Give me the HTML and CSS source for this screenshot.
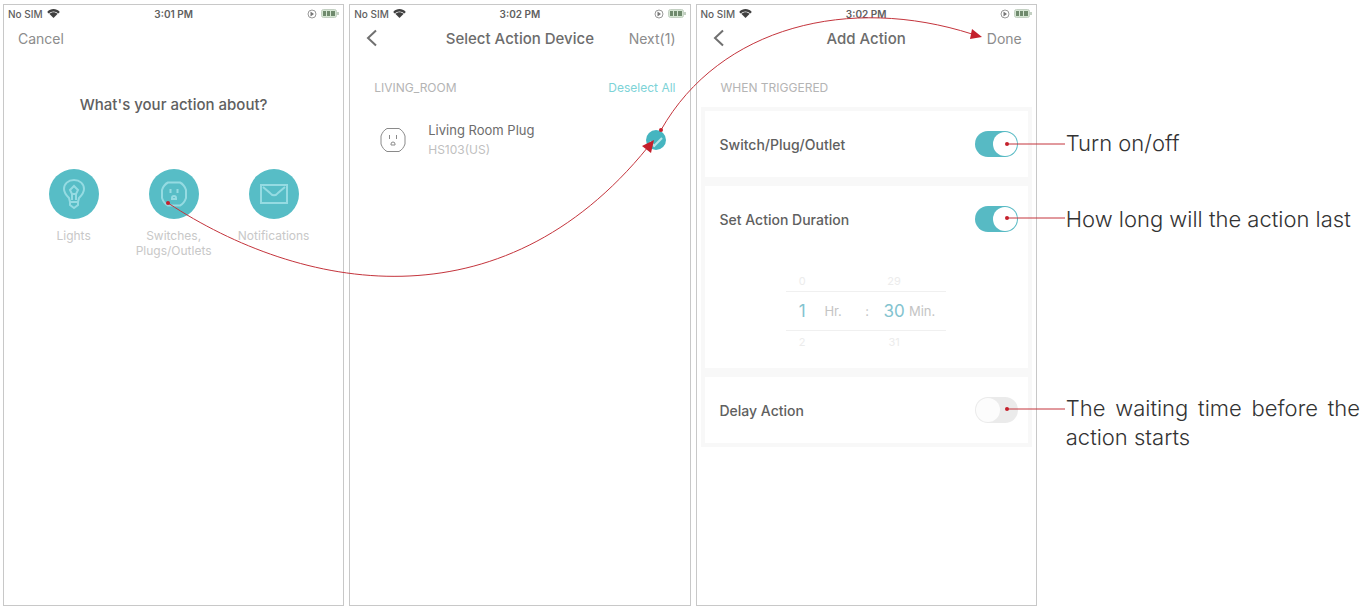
FILE: index.html
```html
<!DOCTYPE html>
<html lang="en">
<head>
    <meta charset="UTF-8">
    <meta name="viewport" content="width=device-width, initial-scale=1.0">
    <title>Add Action</title>
    <link rel="stylesheet" href="styles.css">
</head>
<body>
    <!-- shared icons -->
    <svg class="sprite" aria-hidden="true">
        <symbol id="wifi" viewBox="0 0 14 10">
            <path d="M0 3.2C4-1 10-1 14 3.2L12.3 5C9.300 2 4.700 2 1.700 5Z"/>
            <path d="M2.300 5.400C5 3 9 3 11.700 5.400L7 10Z"/>
        </symbol>
        <symbol id="lock" viewBox="0 0 10 10">
            <circle cx="5" cy="5" r="4" fill="none" stroke="currentColor" stroke-width="1"/>
            <path d="M3.500 2.500L7 5L3.500 7.500Z"/>
        </symbol>
        <symbol id="battery" viewBox="0 0 18 9">
            <rect x="0.500" y="0.500" width="15" height="8" rx="2" fill="#d5e6d3" stroke="#c3d0c2"/>
            <rect x="2" y="2" width="3" height="5" fill="#6f8a6d"/>
            <rect x="6" y="2" width="3" height="5" fill="#6f8a6d"/>
            <rect x="10" y="2" width="4" height="5" fill="#6f8a6d"/>
            <rect x="16" y="3" width="2" height="3" fill="#c3d0c2"/>
        </symbol>
        <symbol id="outlet" viewBox="0 0 28 28">
            <path d="M8 2.500H20C23 4 25 7 26 10V18C25 21 23 24 20 25.500H8C5 24 3 21 2 18V10C3 7 5 4 8 2.500Z"/>
            <path d="M10.500 9V13M17.500 9V13M12 19V18a2 2 0 0 1 4 0V19Z"/>
        </symbol>
        <symbol id="back" viewBox="0 0 12 18">
            <path d="M10 1.500L2 9L10 16.500"/>
        </symbol>
    </svg>

    <main class="page">
        <section class="phone">
            <div class="status">
                <span class="carrier">No SIM <svg class="wifi"><use href="#wifi"/></svg></span>
                <span class="time">3:01 PM</span>
                <span class="power"><svg class="lock"><use href="#lock"/></svg><svg class="battery"><use href="#battery"/></svg></span>
            </div>
            <header class="nav">
                <button type="button" class="nav-btn">Cancel</button>
            </header>
            <h1 class="question">What's your action about?</h1>
            <div class="actions">
                <button type="button" class="action">
                    <span class="circle">
                        <svg viewBox="0 0 28 32">
                            <path d="M10 24L9 20C6 17 4 15 4 11C4 6 8 2 14 2S24 6 24 11C24 15 22 17 19 20L18 24ZM10 24V27L14 30L18 27V24"/>
                            <path d="M12 22V16L10 12L14 8L18 12L16 16V22M12 16H16"/>
                        </svg>
                    </span>
                    Lights
                </button>
                <button type="button" class="action">
                    <span class="circle"><svg class="outlet"><use href="#outlet"/></svg></span>
                    Switches,<br>Plugs/Outlets
                </button>
                <button type="button" class="action">
                    <span class="circle">
                        <svg viewBox="0 0 28 32">
                            <rect x="1" y="7" width="26" height="18"/>
                            <path d="M3 9L10 15C12 18 16 18 18 15L25 9"/>
                        </svg>
                    </span>
                    Notifications
                </button>
            </div>
        </section>

        <section class="phone">
            <div class="status">
                <span class="carrier">No SIM <svg class="wifi"><use href="#wifi"/></svg></span>
                <span class="time">3:02 PM</span>
                <span class="power"><svg class="lock"><use href="#lock"/></svg><svg class="battery"><use href="#battery"/></svg></span>
            </div>
            <header class="nav">
                <button type="button" class="nav-btn" aria-label="Back"><svg class="back"><use href="#back"/></svg></button>
                <h2 class="nav-title">Select Action Device</h2>
                <button type="button" class="nav-btn">Next(1)</button>
            </header>
            <div class="group-head">
                <span>LIVING_ROOM</span>
                <button type="button" class="deselect">Deselect All</button>
            </div>
            <label class="device">
                <svg class="device-icon"><use href="#outlet"/></svg>
                <span class="device-text">
                    <span class="device-name">Living Room Plug</span>
                    <span class="device-model">HS103(US)</span>
                </span>
                <input type="checkbox" class="tick" checked>
            </label>
        </section>

        <section class="phone">
            <div class="status">
                <span class="carrier">No SIM <svg class="wifi"><use href="#wifi"/></svg></span>
                <span class="time">3:02 PM</span>
                <span class="power"><svg class="lock"><use href="#lock"/></svg><svg class="battery"><use href="#battery"/></svg></span>
            </div>
            <header class="nav">
                <button type="button" class="nav-btn" aria-label="Back"><svg class="back"><use href="#back"/></svg></button>
                <h2 class="nav-title">Add Action</h2>
                <button type="button" class="nav-btn">Done</button>
            </header>
            <div class="group-head">
                <span>WHEN TRIGGERED</span>
            </div>
            <div class="cards">
                <div class="card">
                    <label class="row">Switch/Plug/Outlet <input type="checkbox" class="toggle" checked></label>
                </div>
                <div class="card">
                    <label class="row">Set Action Duration <input type="checkbox" class="toggle" checked></label>
                    <div class="picker">
                        <div class="wheel ghost"><span>0</span><span></span><span></span><span>29</span><span></span></div>
                        <div class="wheel current">
                            <input type="text" id="hours" class="value" value="1">
                            <label for="hours">Hr.</label>
                            <span class="colon">:</span>
                            <input type="text" id="minutes" class="value" value="30">
                            <label for="minutes">Min.</label>
                        </div>
                        <div class="wheel ghost"><span>2</span><span></span><span></span><span>31</span><span></span></div>
                    </div>
                </div>
                <div class="card">
                    <label class="row">Delay Action <input type="checkbox" class="toggle"></label>
                </div>
            </div>
        </section>

        <aside class="notes">
            <p class="note">Turn on/off</p>
            <p class="note">How long will the action last</p>
            <p class="note note-delay">The waiting time before the action starts</p>
        </aside>

        <!-- arrows and leader lines -->
        <svg class="arrows" viewBox="0 0 1365 608" preserveAspectRatio="none" aria-hidden="true">
            <path d="M168 203C300 290 500 330 648 147"/>
            <path d="M661 130C720 26 850 -5 972 34"/>
            <path d="M1007 144H1065M1007 218H1065M1007 409H1065"/>
            <g class="heads">
                <path d="M654 140L651 153L642 146Z"/>
                <path d="M982 37L970 39L972 29Z"/>
                <circle cx="168" cy="203" r="2"/>
                <circle cx="661" cy="130" r="2"/>
                <circle cx="1007" cy="144" r="2"/>
                <circle cx="1007" cy="218" r="2"/>
                <circle cx="1007" cy="409" r="2"/>
            </g>
        </svg>
    </main>
</body>
</html>
```

FILE: styles.css
```css
* {
    box-sizing: border-box;
}

body {
    margin: 0;
    background: #fff;
    color: #6c6c6c;
    font-family: Inter, "Liberation Sans", sans-serif;
    font-size: 14px;
}

h1, h2, p {
    margin: 0;
}

button {
    padding: 0;
    border: none;
    background: none;
    color: inherit;
    font: inherit;
    cursor: pointer;
}

.sprite {
    display: none;
}

.page {
    position: relative;
    display: grid;
    grid-template-columns: repeat(3, 25vw) 1fr;
    gap: 5px;
    min-height: 100vh;
    padding: 4px 3px 2px;
}

.phone {
    border: 1px solid #c8c8c8;
}

/* status bar */
.status {
    display: grid;
    grid-template-columns: 1fr auto 1fr;
    align-items: center;
    height: 17px;
    padding: 0 4px;
    color: #606060;
    font-size: 10px;
    font-weight: 500;
}

.time {
    font-weight: 600;
}

.carrier, .power {
    display: flex;
    align-items: center;
    gap: 4px;
}

.power {
    justify-content: flex-end;
}

.wifi {
    width: 13px;
    height: 9px;
    fill: #404040;
}

.lock {
    width: 10px;
    height: 10px;
    fill: #777;
    color: #999;
}

.battery {
    width: 18px;
    height: 9px;
}

/* nav bar */
.nav {
    display: grid;
    grid-template-columns: 1fr auto 1fr;
    align-items: center;
    height: 32px;
    padding: 0 14px;
}

.nav-btn {
    justify-self: start;
    color: #8c8c8c;
}

.nav-btn:last-child:not(:first-child) {
    justify-self: end;
}

.nav-title {
    font-size: 15px;
    font-weight: 500;
}

.back {
    display: block;
    width: 16px;
    height: 18px;
    fill: none;
    stroke: #707070;
    stroke-width: 2;
}

/* action picker */
.question {
    margin-top: 41px;
    color: #606060;
    font-size: 15px;
    font-weight: 500;
    line-height: 20px;
    text-align: center;
}

.actions {
    display: grid;
    grid-template-columns: repeat(3, 100px);
    justify-content: center;
    margin-top: 54px;
}

.action {
    display: flex;
    flex-direction: column;
    align-items: center;
    color: #c8c8c8;
    font-size: 12px;
    line-height: 15px;
}

.action .circle {
    display: flex;
    align-items: center;
    justify-content: center;
    width: 50px;
    height: 50px;
    margin-bottom: 9px;
    border-radius: 50%;
    background: #57bdc6;
}

.circle svg {
    width: 28px;
    height: 32px;
    fill: none;
    stroke: #95dbe2;
    stroke-width: 2;
}

/* device list */
.group-head {
    display: flex;
    align-items: center;
    justify-content: space-between;
    height: 20px;
    margin-top: 23px;
    padding: 0 14px 0 24px;
    color: #b4b4b4;
    font-size: 12px;
}

.deselect {
    color: #7dd3d7;
}

.device {
    display: flex;
    align-items: center;
    height: 48px;
    margin-top: 19px;
    padding: 0 24px 0 29px;
}

.device-icon {
    width: 28px;
    height: 28px;
    fill: none;
    stroke: #8a8a8a;
    stroke-width: 1;
}

.device-text {
    display: flex;
    flex: 1;
    flex-direction: column;
    margin-left: 21px;
    line-height: 20px;
}

.device-name {
    font-size: 13px;
}

.device-model {
    color: #bfbfbf;
    font-size: 12px;
}

.tick {
    appearance: none;
    display: grid;
    place-items: center;
    width: 20px;
    height: 20px;
    margin: 0;
    border-radius: 50%;
    background: #d8d8d8;
}

.tick:checked {
    background: #45b5c0;
}

.tick:checked::after {
    content: "";
    width: 10px;
    height: 5px;
    border-bottom: 2px solid #b5e5e8;
    border-left: 2px solid #b5e5e8;
    transform: rotate(-45deg);
}

/* settings cards */
.cards {
    display: flex;
    flex-direction: column;
    gap: 9px;
    margin: 10px 4px 0;
    padding: 4px;
    background: #f8f8f8;
}

.card {
    background: #fff;
}

.row {
    display: flex;
    align-items: center;
    justify-content: space-between;
    height: 66px;
    padding: 0 10px 0 15px;
    color: #606060;
    font-weight: 500;
}

.toggle {
    appearance: none;
    display: flex;
    width: 43px;
    height: 26px;
    margin: 0;
    border-radius: 13px;
    background: #ebebeb;
}

.toggle::after {
    content: "";
    width: 24px;
    height: 24px;
    margin: 1px;
    border-radius: 50%;
    background: #fcfcfc;
}

.toggle:checked {
    justify-content: flex-end;
    background: #57bac4;
}

.toggle:checked::after {
    background: #fff;
}

.picker {
    width: 160px;
    margin: 0 auto;
    padding: 18px 0 16px;
}

.wheel {
    display: grid;
    grid-template-columns: 32px 30px 34px 24px 32px;
    align-items: center;
    height: 21px;
    color: #c4c4c4;
    font-size: 13px;
    text-align: center;
}

.wheel.ghost {
    color: #ececec;
    font-size: 11px;
}

.wheel.current {
    height: 40px;
    border-top: 1px solid #f0f0f0;
    border-bottom: 1px solid #f0f0f0;
}

.value {
    width: 100%;
    padding: 0;
    border: none;
    background: none;
    color: #83c3cf;
    font-family: inherit;
    font-size: 17px;
    text-align: center;
}

.colon {
    padding-left: 4px;
}

/* notes on the right */
.notes {
    padding: 125px 2px 0 24px;
    color: #333;
    font-size: 22px;
    font-weight: 300;
    line-height: 29px;
}

.note {
    margin-bottom: 47px;
}

.note-delay {
    margin-top: 160px;
    text-align: justify;
}

.arrows {
    position: absolute;
    top: 0;
    left: 0;
    width: 100%;
    height: 100%;
    fill: none;
    stroke: #c4343c;
    stroke-width: 1;
    pointer-events: none;
}

.heads {
    fill: #c4202c;
    stroke: none;
}
```
